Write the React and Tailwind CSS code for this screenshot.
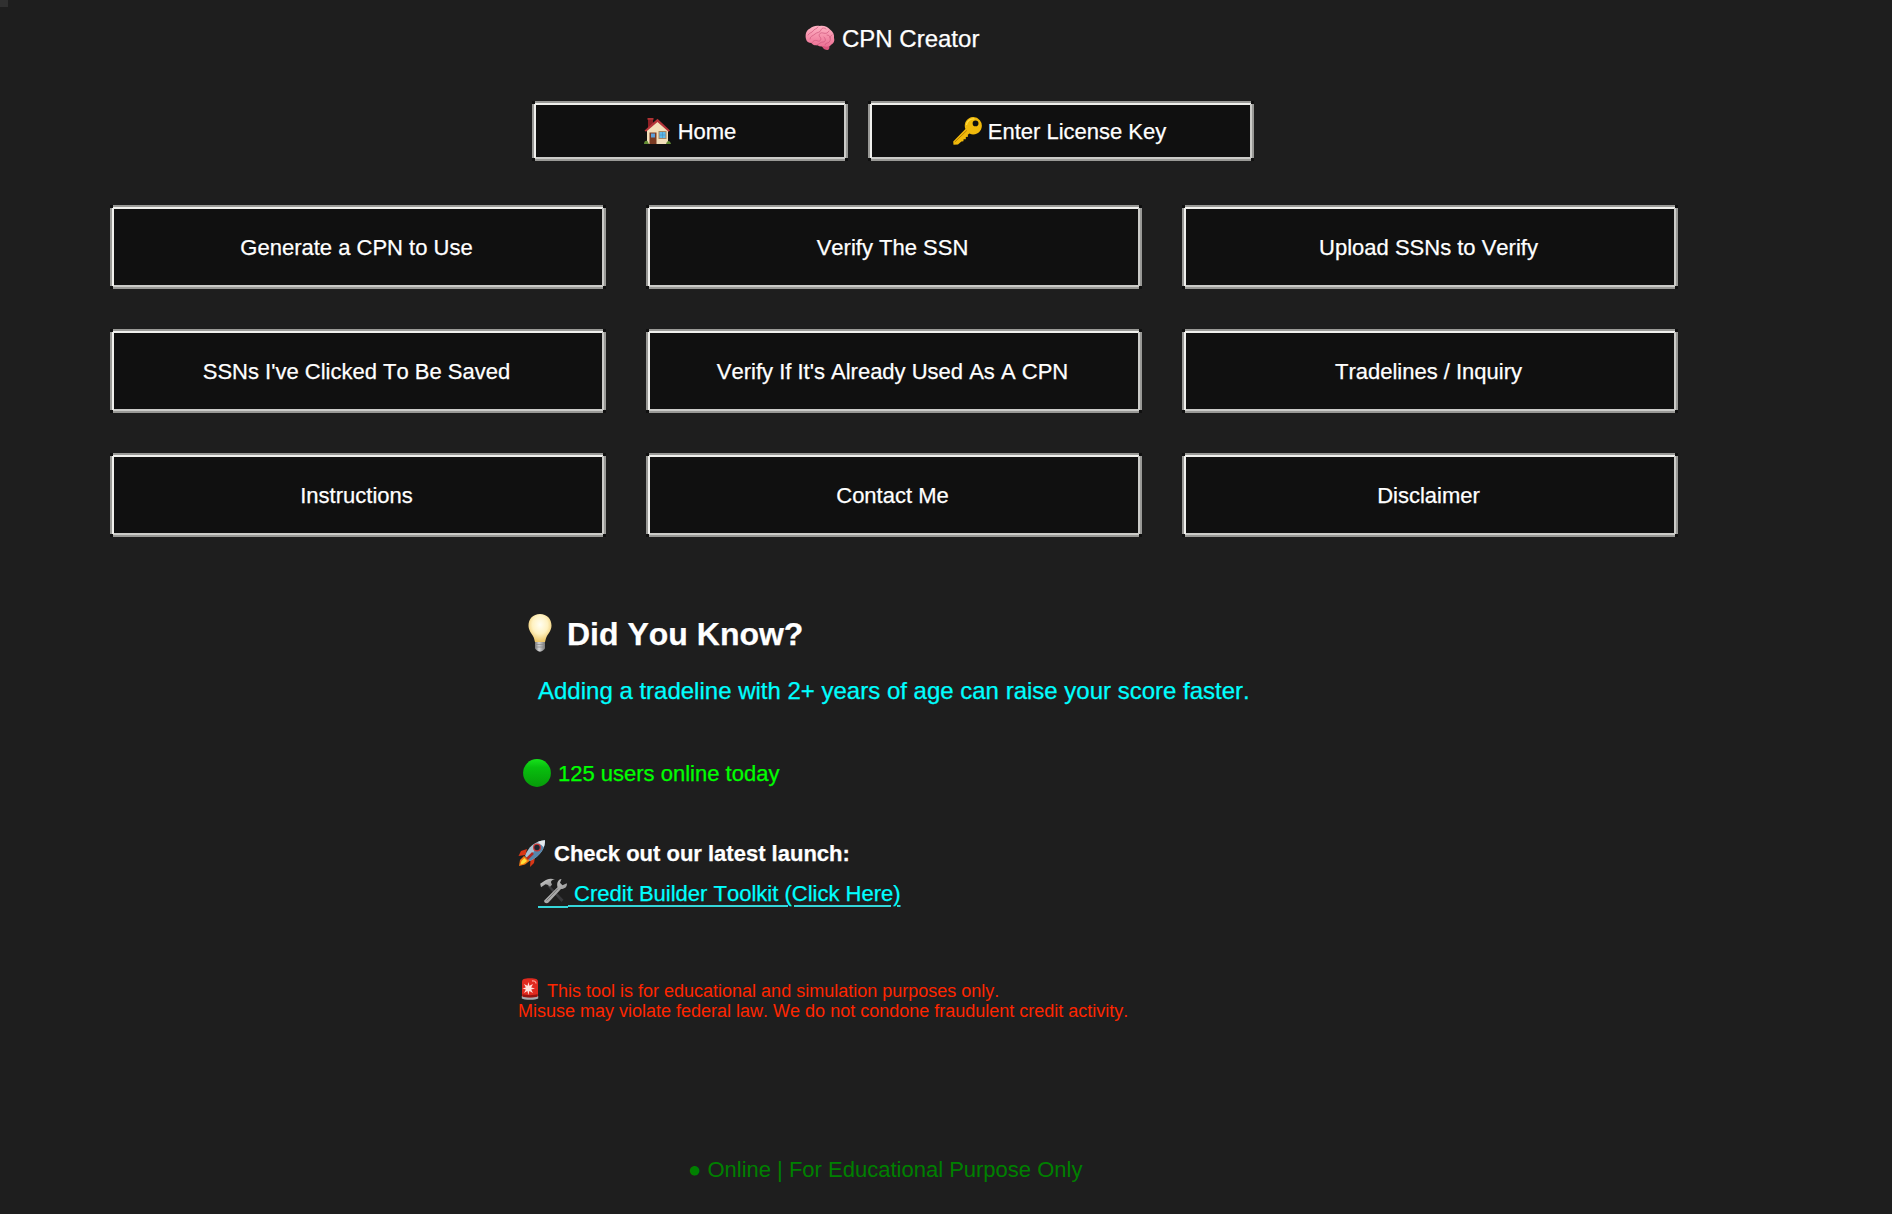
import React from "react";

function Brain() {
  return (
    <svg className="h-[26px] w-[30px] shrink-0" viewBox="0 0 30 26">
      <defs>
        <linearGradient id="brain" x1="0" y1="0" x2="0" y2="1">
          <stop offset="0" stopColor="#ffb3c4" />
          <stop offset="1" stopColor="#ec6f93" />
        </linearGradient>
      </defs>
      <path d="M16 19c1 3 3 6 6 6 2 0 3-2 2-5z" fill="#d9557c" />
      <path d="M1 14C0 10 1 5 5 3.500C8 .5 12 .3 15 1c4-.6 8 1 10 3.500 3 2 4.500 5 4 8.500 1 3-.5 5.500-2.500 6.500-2 2.500-5 2.800-8 1.500-2 1-4 .5-6-.8-3 .3-5-.4-6-2.200C3.500 18 1.500 16.500 1 14z" fill="url(#brain)" />
      <path d="M3 10c2-3 4-2 5-4s4-2 5-4M5 14c0-3 3-3 5-5s5-1 6-4 4-2 5-1M7 18c1-3 4-3 6-2s4-2 2-4 0-5 3-4 5 0 6-2M12 20c3-1 3-3 6-3s3-3 1-5M20 20c0-3 4-1 5-4s-1-4 2-6M22 10c2 0 3 1 3 3" fill="none" stroke="#cf587d" strokeWidth="0.7" strokeLinecap="round" />
    </svg>
  );
}

function House() {
  return (
    <svg className="h-[27px] w-[27px] shrink-0" viewBox="0 0 27 27">
      <path d="M4 1h5v9H4z" fill="#8d2025" />
      <path d="M3.500 0h6v1.800h-6z" fill="#b13334" />
      <path d="M3 12 13 3l11 9v14H3z" fill="#f3dfba" />
      <path d="M13.500.8 26 12.500l-1.500 1.300L13.500 4 2 13.800.5 12.500z" fill="#b5343a" />
      <path d="M5.500 14.500h7V26h-7z" fill="#7a3b22" />
      <path d="M7 15.500h4v4H7z" fill="#5d9fd9" />
      <path d="M14.500 13h8v8h-8z" fill="#a98460" />
      <path d="M15.500 14h6v6h-6z" fill="#61b9e8" />
      <path d="M18.500 14v6M15.500 17h6" stroke="#438dbd" strokeWidth=".6" />
      <path d="M0 26c0-3 2-4 3.500-3L5 26zM22 26c1-4 4-4 5 0z" fill="#658f35" />
    </svg>
  );
}

function Key() {
  return (
    <svg className="h-[28px] w-[29px] shrink-0" viewBox="0 0 29 28">
      <path fillRule="evenodd" d="M20 0a8.700 8.700 0 1 1-3.500 16.600l-1.700 1.200.2 2-2.200.2v2.200l-2.200.1-.2 1.900-2 .2-3.400 3.100-4.500.3-.3-3.200L12.400 12A8.700 8.700 0 0 1 20 0zM22.500 3.500a2.900 2.900 0 1 0 .1 5.800 2.900 2.900 0 0 0-.1-5.800z" fill="#f0b90b" />
      <path d="M13.800 13.500 1.800 25" stroke="#b67d00" strokeWidth="1" />
      <path d="M13.500 8c.5-4 4-6.500 8-6" fill="none" stroke="#ffdf48" strokeWidth="1.200" />
    </svg>
  );
}

function Bulb() {
  return (
    <svg className="relative -top-px h-[38px] w-[24px] shrink-0" viewBox="0 0 24 38">
      <defs>
        <radialGradient id="bulb" cx=".5" cy=".38" r=".6">
          <stop offset="0" stopColor="#fffef2" />
          <stop offset=".55" stopColor="#fff2c2" />
          <stop offset="1" stopColor="#edc76a" />
        </radialGradient>
        <linearGradient id="cap">
          <stop offset="0" stopColor="#777" />
          <stop offset=".4" stopColor="#d6d6d6" />
          <stop offset="1" stopColor="#777" />
        </linearGradient>
      </defs>
      <path d="M12 0C5 0 .5 5 .5 11.500c0 5 3 7.500 5 11.500.8 2 .9 3 1.500 5h10c.6-2 .7-3 1.500-5 2-4 5-6.500 5-11.500C23.500 5 19 0 12 0z" fill="url(#bulb)" />
      <path d="M7 28h10v6c0 1-1 1.500-2 2.500-1.500 1.500-4.500 1.500-6 0C8 35.500 7 35 7 34z" fill="url(#cap)" />
      <path d="M7 30.500h10M7 33h10" stroke="#888" strokeWidth=".7" />
    </svg>
  );
}

function GreenBall() {
  return (
    <svg className="h-[28px] w-[28px] shrink-0" viewBox="0 0 28 28">
      <defs>
        <linearGradient id="ball" x1="0" y1="0" x2="0" y2="1">
          <stop offset="0" stopColor="#16e21b" />
          <stop offset=".3" stopColor="#08bf0e" />
          <stop offset="1" stopColor="#079b0a" />
        </linearGradient>
      </defs>
      <circle cx="14" cy="14" r="13.900" fill="url(#ball)" />
    </svg>
  );
}

function Rocket() {
  return (
    <svg className="h-[27px] w-[28px] shrink-0" viewBox="0 0 28 27">
      <path d="M9 9 3 11 .5 16l7-1zM17 17l-1 6-4 4 .5-7z" fill="#d93716" />
      <path d="m6 16-4 4-1 6 6-1.500 5-4z" fill="#f47a13" />
      <path d="m6.500 18-3 3-1 3.500 3.500-1 3-2.500z" fill="#ffe13a" />
      <path d="M7 16C10 7 17 1 27 .2 27 9 22 16 12 21z" fill="#a9c0d2" />
      <path d="M12 21c10-5 15-12 15-20.800L9.500 18z" fill="#5686ac" />
      <path d="M20 1.800C22 .8 24.500.3 27 .2c0 2.600-.5 5-1.300 7z" fill="#e4e9ed" />
      <circle cx="19" cy="7.500" r="4" fill="#c93837" />
      <circle cx="19" cy="7.500" r="2.700" fill="#1c2430" />
      <path d="m15 13-6 6" stroke="#b52822" strokeWidth="2.500" />
    </svg>
  );
}

function Tools() {
  return (
    <svg className="h-[26px] w-[28px] shrink-0" viewBox="0 0 28 27" preserveAspectRatio="none">
      <defs>
        <linearGradient id="steel" x1="0" y1="0" x2="1" y2="1">
          <stop offset="0" stopColor="#d4d4d4" />
          <stop offset="1" stopColor="#858585" />
        </linearGradient>
      </defs>
      <path d="m9 7 14.500 15.500-2 2.500L7.500 8.500z" fill="#38383b" />
      <path d="M1 9.500.2 6 4 3.500C7 .5 11 0 15 1.500c-3 .3-4 1.500-4 3l1 2.500-2 2-2.500-2-2-.5z" fill="url(#steel)" />
      <path d="m21.500 1-1.500 4 2.500 2.500 4.300-2C27.500 9 25 11.500 21 11.500L8.500 25.500c-1.500 1.500-4 .5-4.300-1-.2-1 .3-1.500.8-2L17.500 9.500C16.500 5 18 1.500 21.500 1z" fill="url(#steel)" />
      <path d="M18 11 6.500 23.500" stroke="#707070" strokeWidth="1" />
    </svg>
  );
}

function Siren() {
  return (
    <svg className="relative -top-[2px] h-[22px] w-[18px] shrink-0" viewBox="0 0 18 22">
      <path d="M.8 18h16.400v2.500C15 22.200 3 22.200.8 20.500z" fill="#a9aaad" />
      <path d="M1 4C1 1 3 .2 9 .2S17 1 17 4v14c-3 1.500-13 1.500-16 0z" fill="#e02a1f" />
      <path d="M1.500 16c3 1.500 12 1.500 15 0v2.500c-3 1.300-12 1.300-15 0z" fill="#96130f" />
      <path d="m7.500 4 .9 3.800L12 6l-1.800 3.500 3.800 1-3.800 1L12 15l-3.600-2-1 4-1-4L3 15l1.800-3.500-3.300-1 3.300-1L3 6l3.500 1.800z" fill="#ffe2dc" />
      <path d="M11 3c2-.5 4 .3 4 2.500" fill="none" stroke="#ff9c90" strokeWidth="1.300" />
    </svg>
  );
}

function BevelButton({ children, className }) {
  return (
    <button className={`relative flex items-center justify-center bg-[#101010] text-[22px] leading-[28px] whitespace-nowrap text-white ${className}`}>
      <span className="absolute inset-x-[3px] top-0 h-[4px] border-t-2 border-[#999996] bg-[#f0f0ed]" />
      <span className="absolute inset-x-[3px] bottom-0 h-[4px] border-b-2 border-[#999996] bg-[#cbcbc8]" />
      <span className="absolute inset-y-[3px] left-0 w-[4px] border-l-2 border-[#999996] bg-[#f0f0ed]" />
      <span className="absolute inset-y-[3px] right-0 w-[4px] border-r-2 border-[#999996] bg-[#cbcbc8]" />
      {children}
    </button>
  );
}

const actions = [
  "Generate a CPN to Use",
  "Verify The SSN",
  "Upload SSNs to Verify",
  "SSNs I've Clicked To Be Saved",
  "Verify If It's Already Used As A CPN",
  "Tradelines / Inquiry",
  "Instructions",
  "Contact Me",
  "Disclaimer",
];

export default function App() {
  return (
    <div className="relative flex h-[1214px] w-[1892px] flex-col overflow-hidden bg-[#1e1e1e] pt-[24px] font-['Liberation_Sans',Arial,sans-serif] text-white [font-kerning:none] [-webkit-text-stroke:0.25px]">
      <span className="absolute top-0 left-0 h-[7px] w-[8px] bg-[#303030]" />
      <h1 className="ml-[805px] flex h-[28px] items-center gap-[7px] text-[24px] leading-[28px]">
        <Brain />
        <span className="pt-[2px]">CPN Creator</span>
      </h1>

      <nav className="mt-[49px] ml-[532px] flex gap-[20px]">
        <BevelButton className="h-[60px] w-[316px] gap-[7px]">
          <House />
          <span className="pt-[2px]">Home</span>
        </BevelButton>
        <BevelButton className="h-[60px] w-[386px] gap-[6px] pr-[3px]">
          <Key />
          <span className="pt-[2px]">Enter License Key</span>
        </BevelButton>
      </nav>

      <div className="mt-[44px] ml-[110px] grid w-[1568px] grid-cols-3 gap-[40px]">
        {actions.map((label) => (
          <BevelButton key={label} className="h-[84px] pr-[3px]">
            <span className="pt-[2px]">{label}</span>
          </BevelButton>
        ))}
      </div>

      <section className="mt-[77px] ml-[518px] flex flex-col items-start whitespace-nowrap">
        <h2 className="ml-[10px] flex h-[40px] items-center gap-[15px] text-[32px] leading-[40px] font-bold">
          <Bulb />
          Did You Know?
        </h2>
        <p className="mt-[23px] ml-[20px] text-[24px] leading-[28px] text-[#00ffff]">
          Adding a tradeline with 2+ years of age can raise your score faster.
        </p>
        <p className="mt-[54px] ml-[5px] flex h-[28px] items-center gap-[7px] text-[22px] leading-[28px] text-[#00ff00]">
          <GreenBall />
          <span className="pt-[2px]">125 users online today</span>
        </p>
        <p className="mt-[52px] flex h-[28px] items-center gap-[8px] text-[22px] leading-[28px] font-bold">
          <Rocket />
          <span className="pt-[2px]">Check out our latest launch:</span>
        </p>
        <a className="mt-[13px] ml-[20px] flex items-center text-[22px] leading-[28px] text-[#00ffff]" href="#">
          <span className="flex h-[28px] w-[30px] items-start border-b-2 border-[#35d6da] pl-[2px]">
            <span className="-mt-[2px]">
              <Tools />
            </span>
          </span>
          <span className="whitespace-pre underline decoration-[#35d6da] decoration-2 underline-offset-[4px]"> Credit Builder Toolkit (Click Here)</span>
        </a>
        <div className="mt-[73px] text-[18px] leading-[20px] text-[#ff2600] [-webkit-text-stroke:0px]">
          <p className="ml-[3px] flex h-[20px] items-center gap-[8px]">
            <Siren />
            This tool is for educational and simulation purposes only.
          </p>
          <p>Misuse may violate federal law. We do not condone fraudulent credit activity.</p>
        </div>
      </section>

      <footer className="mt-[135px] ml-[688px] text-[22px] leading-[28px] text-[#008000] [-webkit-text-stroke:0px]">
        ● Online | For Educational Purpose Only
      </footer>
    </div>
  );
}
